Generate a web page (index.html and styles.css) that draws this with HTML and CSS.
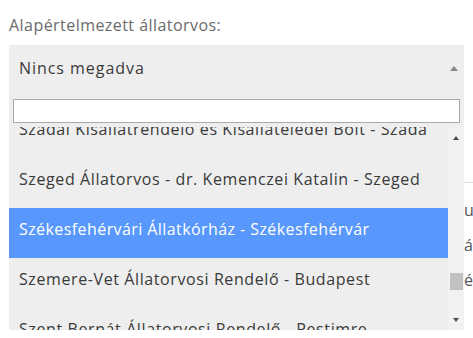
FILE: index.html
```html
<!DOCTYPE html>
<html lang="hu">
<head>
<meta charset="utf-8">
<title>Alapértelmezett állatorvos</title>
<link rel="stylesheet" href="styles.css">
</head>
<body>
<div class="page">
  <div class="main">
    <label class="label">Alapértelmezett állatorvos:</label>
    <div class="select">
      <span class="select-value">Nincs megadva</span>
      <span class="caret-up"></span>
    </div>
    <div class="dropdown">
      <div class="search-wrap"><input class="search" type="text" aria-label="Keresés"></div>
      <div class="results">
        <ul class="options">
          <li class="option">Szadai Kisállatrendelő és Kisállateledel Bolt - Szada</li>
          <li class="option">Szeged Állatorvos - dr. Kemenczei Katalin - Szeged</li>
          <li class="option active">Székesfehérvári Állatkórház - Székesfehérvár</li>
          <li class="option">Szemere-Vet Állatorvosi Rendelő - Budapest</li>
          <li class="option wrap">Szent Bernát Állatorvosi Rendelő - Pestimre - Budapest</li>
        </ul>
        <div class="scrollbar">
          <span class="sb-arrow up"></span>
          <div class="sb-track"><span class="sb-thumb"></span></div>
          <span class="sb-arrow down"></span>
        </div>
      </div>
    </div>
  </div>
  <div class="side">
    <div class="side-rule"></div>
    <div class="side-line first">u</div>
    <div class="side-line">á</div>
    <div class="side-line">é<span class="side-accent">l</span></div>
  </div>
</div>
</body>
</html>
```

FILE: styles.css
```css
html, body {
  margin: 0;
  padding: 0;
  background: #ffffff;
  overflow: hidden;
}

body {
  font-family: "Open Sans", "DejaVu Sans", sans-serif;
  color: #333333;
}

.page {
  display: flex;
  width: 473px;
  height: 338px;
}

.main {
  width: 455px;
  flex: none;
  padding-left: 9px;
  display: flex;
  flex-direction: column;
}

.label {
  display: block;
  font-size: 16px;
  line-height: 20px;
  color: #6b6b6b;
  letter-spacing: 0.45px;
  margin-top: 15px;
  height: 30px;
  white-space: nowrap;
}

.select {
  box-sizing: border-box;
  height: 50px;
  background: #eeeeee;
  display: flex;
  align-items: center;
  justify-content: space-between;
  padding: 0 6px 4px 10px;
}

.select-value {
  font-size: 16px;
  letter-spacing: 0.95px;
  color: #3a3a3a;
}

.caret-up {
  width: 0;
  height: 0;
  border-left: 4px solid transparent;
  border-right: 4px solid transparent;
  border-bottom: 5px solid #888888;
  margin-top: 0;
}

.dropdown {
  background: #eeeeee;
  display: flex;
  flex-direction: column;
}

.search-wrap {
  padding: 4px;
}

.search {
  display: block;
  box-sizing: border-box;
  width: 100%;
  height: 24px;
  margin: 0;
  border: 1px solid #aaaaaa;
  background: #ffffff;
  padding: 0 4px;
  outline: none;
}

.results {
  display: flex;
  height: 203px;
  overflow: hidden;
}

.options {
  list-style: none;
  margin: -19px 0 0 0;
  padding: 0;
  flex: 1;
  min-width: 0;
}

.option {
  box-sizing: border-box;
  height: 50px;
  line-height: 42px;
  padding: 0 0 8px 10px;
  font-size: 16px;
  letter-spacing: 0.6px;
  color: #3a3a3a;
  white-space: nowrap;
  overflow: hidden;
}

.option.active {
  background: #5897fb;
  color: #ffffff;
  letter-spacing: 0.42px;
}

.option.wrap {
  white-space: normal;
  height: auto;
  padding-right: 8px;
}

.scrollbar {
  width: 16px;
  flex: none;
  background: #f1f1f1;
  display: flex;
  flex-direction: column;
  align-items: center;
}

.sb-arrow {
  width: 0;
  height: 0;
  border-left: 3.5px solid transparent;
  border-right: 3.5px solid transparent;
}

.sb-arrow.up {
  border-bottom: 4px solid #505050;
  margin-top: 9px;
}

.sb-arrow.down {
  border-top: 4px solid #505050;
  margin-bottom: 8px;
}

.sb-track {
  flex: 1;
  width: 100%;
  display: flex;
  justify-content: center;
}

.sb-thumb {
  width: 13px;
  height: 17px;
  background: #c1c1c1;
  margin-top: 133px;
  margin-left: 1px;
}

.side {
  flex: 1;
  min-width: 0;
  overflow: hidden;
  display: flex;
  flex-direction: column;
}

.side-rule {
  margin-top: 182px;
  height: 1px;
  background: #dddddd;
}

.side-line {
  font-size: 16px;
  line-height: 35px;
  color: #555555;
  white-space: nowrap;
}

.side-line.first {
  margin-top: 10px;
}

.side-accent {
  color: #e8a04a;
}
```
